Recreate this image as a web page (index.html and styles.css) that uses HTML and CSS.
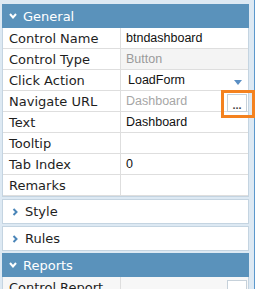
FILE: index.html
```html
<!DOCTYPE html>
<html lang="en">
<head>
  <meta charset="UTF-8" />
  <title>Control Properties</title>
  <link rel="stylesheet" href="styles.css">
</head>
<body>
  <div class="frame">
    <div class="section">
      <div class="section-head"><svg class="chev" width="8" height="6" viewBox="0 0 8 6"><polyline points="1,1 4,4.5 7,1" /></svg>General</div>
      <div class="row"><div class="label">Control Name</div><div class="value">btndashboard</div></div>
      <div class="row"><div class="label">Control Type</div><div class="value readonly">Button</div></div>
      <div class="row"><div class="label">Click Action</div><div class="value select">LoadForm<span class="caret"></span></div></div>
      <div class="row"><div class="label">Navigate URL</div><div class="value muted">Dashboard<span class="dots">...</span></div></div>
      <div class="row"><div class="label">Text</div><div class="value">Dashboard</div></div>
      <div class="row"><div class="label">Tooltip</div><div class="value"></div></div>
      <div class="row"><div class="label">Tab Index</div><div class="value">0</div></div>
      <div class="row"><div class="label">Remarks</div><div class="value"></div></div>
    </div>

    <div class="section closed"><svg class="arrow" width="6" height="8" viewBox="0 0 6 8"><polyline points="1.5,1 4.5,4 1.5,7" /></svg>Style</div>
    <div class="section closed"><svg class="arrow" width="6" height="8" viewBox="0 0 6 8"><polyline points="1.5,1 4.5,4 1.5,7" /></svg>Rules</div>

    <div class="section">
      <div class="section-head"><svg class="chev" width="8" height="6" viewBox="0 0 8 6"><polyline points="1,1 4,4.5 7,1" /></svg>Reports</div>
      <div class="row shaded"><div class="label">Control Report</div><div class="value"><span class="dots"></span></div></div>
    </div>

    <div class="highlight"></div>
  </div>
</body>
</html>
```

FILE: styles.css
```css
body {
  margin: 0;
  background: #fff;
  font-family: "DejaVu Sans", Verdana, sans-serif;
  font-size: 12px;
  color: #1e1e1e;
  overflow: hidden;
}
.frame {
  position: relative;
  width: 247px;
  height: 289px;
  padding: 4px 5px 0 2px;
  background: #dde9f3;
  border-right: 1px solid #5b98cc;
  display: flex;
  flex-direction: column;
  gap: 2px;
}
.section {
  flex-shrink: 0;
  background: #fff;
  border: 1px solid #c4d4e1;
}
.section-head {
  height: 24px;
  margin: -1px -1px 0 -1px;
  background: #5a92bb;
  color: #fff;
  font-size: 13px;
  display: flex;
  align-items: center;
  padding-left: 7px;
}
.chev {
  margin-right: 6px;
  fill: none;
  stroke: #fff;
  stroke-width: 2;
}
.row {
  display: flex;
  height: 20px;
  border-bottom: 1px solid #dedede;
}
.label {
  width: 111px;
  padding-left: 6px;
  border-right: 1px solid #dedede;
  display: flex;
  align-items: center;
  font-size: 13px;
}
.value {
  flex: 1;
  position: relative;
  display: flex;
  align-items: center;
  padding-left: 5px;
  font-family: "Liberation Sans", Arial, sans-serif;
  font-size: 12.5px;
  color: #111;
}
.readonly {
  background: #f4f4f4;
  color: #9a9a9a;
}
.muted {
  color: #a6a6a6;
}
.select {
  padding-left: 7px;
}
.caret {
  position: absolute;
  right: 6px;
  top: 10px;
  border-left: 4px solid transparent;
  border-right: 4px solid transparent;
  border-top: 5px solid #5a8fc4;
}
.dots {
  position: absolute;
  right: 1px;
  top: 3px;
  width: 18px;
  height: 16px;
  border: 1px solid #c6d1da;
  background: #fff;
  color: #444;
  font-size: 11px;
  font-weight: bold;
  text-align: center;
  line-height: 20px;
}
.closed {
  height: 23px;
  display: flex;
  align-items: center;
  padding-left: 9px;
  font-size: 13px;
}
.arrow {
  margin-right: 7px;
  fill: none;
  stroke: #4a85b8;
  stroke-width: 2;
}
.shaded .label,
.shaded .value {
  background: #f7f7f7;
}
.highlight {
  position: absolute;
  left: 221px;
  top: 90px;
  width: 28px;
  height: 22px;
  border: 3px solid #f4821f;
}
```
